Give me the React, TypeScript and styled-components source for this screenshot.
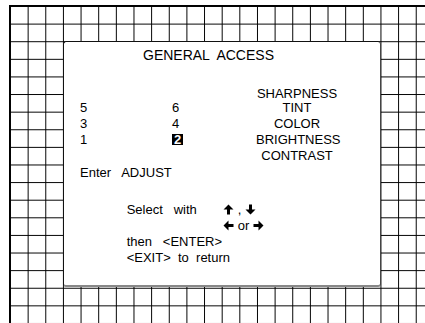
import React from "react";
import styled, { createGlobalStyle } from "styled-components";

const Global = createGlobalStyle`
  html, body { margin: 0; padding: 0; background: #fff; }
  #root { width: 425px; height: 323px; }
`;

const Page = styled.div`
  box-sizing: border-box;
  width: 425px;
  height: 323px;
  overflow: hidden;
  background: #fff;
  padding: 5px 0 0 9px;
  font-family: "Liberation Sans", Arial, sans-serif;
  color: #000;
`;

const Frame = styled.div`
  box-sizing: border-box;
  width: 430px;
  height: 330px;
  border-top: 1px solid #000;
  border-left: 1px solid #000;
  background-color: #fff;
  background-image: linear-gradient(to right, #000 0, #000 1px, transparent 1px),
    linear-gradient(to bottom, #000 0, #000 1px, transparent 1px);
  background-size: 17.65px 17.62px;
  padding: 34.7px 0 0 53px;
`;

const Dialog = styled.div`
  box-sizing: border-box;
  width: 318px;
  height: 246.5px;
  background: #fff;
  border: 1px solid #111;
  border-right-color: #444;
  border-bottom: 2px solid #888;
  border-radius: 3px;
  padding: 5px 0 0 16px;
  display: flex;
  flex-direction: column;
  font-size: 13px;
  line-height: 16px;
  white-space: pre;
`;

const Title = styled.div`
  font-size: 14px;
  padding-left: 63px;
`;

const MenuGrid = styled.div`
  margin-top: 23px;
  display: grid;
  grid-template-columns: 92px 84px 82px;
  grid-template-rows: 14px 16px 16px 16px 16px;
`;

const Cell = styled.div<{ $center?: boolean }>`
  text-align: ${(p) => (p.$center ? "center" : "left")};
`;

const Selected = styled.span`
  display: inline-block;
  background: #000;
  color: #fff;
  font-weight: bold;
  padding: 0 2px;
  line-height: 11px;
`;

const Line = styled.div<{ $mt?: number }>`
  margin-top: ${(p) => p.$mt ?? 0}px;
`;

const SelectGrid = styled.div`
  margin-top: 20.7px;
  margin-left: 46.7px;
  display: grid;
  grid-template-columns: 96px auto;
  grid-auto-rows: 16px;
`;

const Arrows = styled.div`
  display: flex;
  align-items: center;
  gap: 4px;
`;

const Wide = styled.div`
  grid-column: 1 / span 2;
`;

type Dir = "up" | "down" | "left" | "right";

const Arrow = ({ dir }: { dir: Dir }) => {
  const rot = { up: 0, right: 90, down: 180, left: 270 }[dir];
  return (
    <svg width="11" height="11" viewBox="0 0 11 11">
      <path
        d="M5.5 0.5 L10.5 5.5 L7 5.5 L7 10.5 L4 10.5 L4 5.5 L0.5 5.5 Z"
        fill="#000"
        transform={`rotate(${rot} 5.5 5.5)`}
      />
    </svg>
  );
};

export default function App() {
  return (
    <>
      <Global />
      <Page>
        <Frame>
          <Dialog>
            <Title>GENERAL  ACCESS</Title>
            <MenuGrid>
              <Cell />
              <Cell />
              <Cell $center>SHARPNESS</Cell>
              <Cell>5</Cell>
              <Cell>6</Cell>
              <Cell $center>TINT</Cell>
              <Cell>3</Cell>
              <Cell>4</Cell>
              <Cell $center>COLOR</Cell>
              <Cell>1</Cell>
              <Cell>
                <Selected>2</Selected>
              </Cell>
              <Cell $center>BRIGHTNESS</Cell>
              <Cell />
              <Cell />
              <Cell $center>CONTRAST</Cell>
            </MenuGrid>
            <Line $mt={1.6}>Enter   ADJUST</Line>
            <SelectGrid>
              <div>Select   with</div>
              <Arrows>
                <Arrow dir="up" />
                <span>,</span>
                <Arrow dir="down" />
              </Arrows>
              <div />
              <Arrows>
                <Arrow dir="left" />
                <span>or</span>
                <Arrow dir="right" />
              </Arrows>
              <Wide>then   &lt;ENTER&gt;</Wide>
              <Wide>&lt;EXIT&gt;  to  return</Wide>
            </SelectGrid>
          </Dialog>
        </Frame>
      </Page>
    </>
  );
}
